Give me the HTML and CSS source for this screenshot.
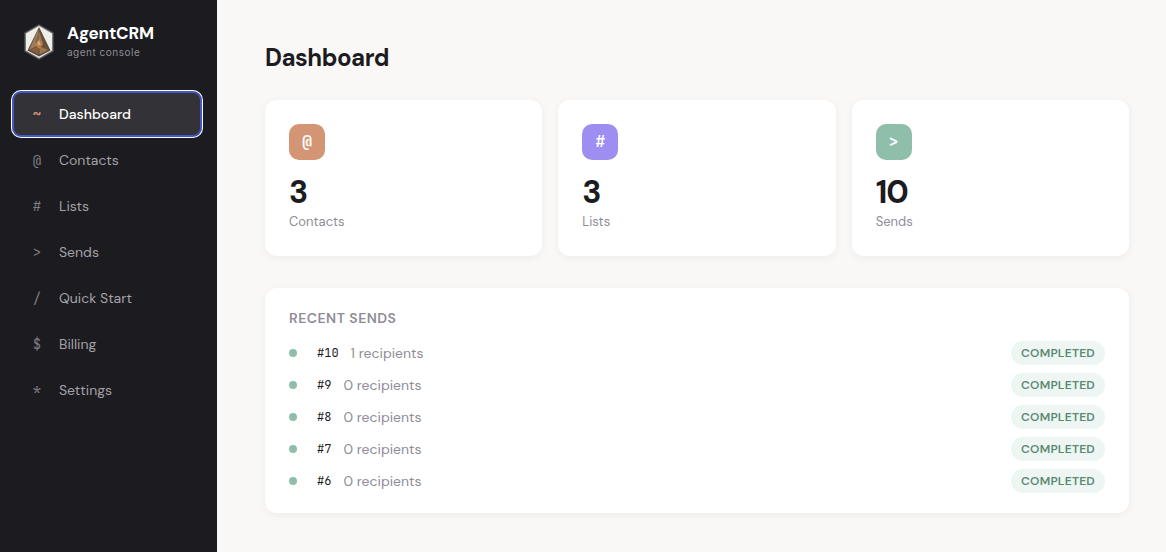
FILE: index.html
```html
<!DOCTYPE html>
<html lang="en">
<head>
    <meta charset="UTF-8">
    <meta name="viewport" content="width=device-width, initial-scale=1.0">
    <title>Dashboard - AgentCRM</title>
    <link rel="stylesheet" href="styles.css">
</head>
<body>
    <aside class="sidebar">
        <div class="brand">
            <svg class="brand-logo" viewBox="0 0 32 38" aria-hidden="true">
                <path d="M16 1 31 9.5v19L16 37 1 28.5V9.5z" fill="#3f4144"/>
                <path d="M16 2 30 10v18L16 36 2 28V10z" fill="#77797a"/>
                <path d="M16 3 29 10.500v17L16 35 3 27.500v-17z" fill="#eeeeeb"/>
                <path d="M16 4 4.500 27.500 16 33.500 27.500 27.500z" fill="#5d4a3b"/>
                <path d="M15.500 5.500 6 27 16 22z" fill="#a07a52"/>
                <path d="M16.500 5.500 26 27 16 22z" fill="#6b4f3b"/>
                <path d="M16 8 12 20 16 23z" fill="#77695c"/>
                <path d="M16 8 20 20 16 23z" fill="#977450"/>
                <path d="M7 27 15.500 23v8.500z" fill="#85603f"/>
                <path d="M25 27 16.500 23v8.500z" fill="#a0764c"/>
                <path d="M16 16 20 21.500 16 26 12 21.500z" fill="#b9824f"/>
                <path d="M16 18 17.500 20.500 16 22.500 14.500 20.500z" fill="#dcae80"/>
            </svg>
            <div>
                <div class="brand-name">AgentCRM</div>
                <div class="brand-sub">agent console</div>
            </div>
        </div>
        <nav class="nav">
            <a href="#dashboard" class="nav-item active" aria-current="page"><span class="nav-icon">~</span>Dashboard</a>
            <a href="#contacts" class="nav-item"><span class="nav-icon">@</span>Contacts</a>
            <a href="#lists" class="nav-item"><span class="nav-icon">#</span>Lists</a>
            <a href="#sends" class="nav-item"><span class="nav-icon">&gt;</span>Sends</a>
            <a href="#quick-start" class="nav-item"><span class="nav-icon">/</span>Quick Start</a>
            <a href="#billing" class="nav-item"><span class="nav-icon">$</span>Billing</a>
            <a href="#settings" class="nav-item"><span class="nav-icon">*</span>Settings</a>
        </nav>
    </aside>

    <main class="main">
        <h1>Dashboard</h1>

        <div class="stats">
            <div class="card">
                <div class="stat-icon orange">@</div>
                <div class="stat-value">3</div>
                <div class="stat-label">Contacts</div>
            </div>
            <div class="card">
                <div class="stat-icon purple">#</div>
                <div class="stat-value">3</div>
                <div class="stat-label">Lists</div>
            </div>
            <div class="card">
                <div class="stat-icon green">&gt;</div>
                <div class="stat-value">10</div>
                <div class="stat-label">Sends</div>
            </div>
        </div>

        <section class="card recent">
            <h2>Recent Sends</h2>
            <ul class="sends">
                <li class="send"><span class="dot"></span><span class="send-id">#10</span><span class="send-info">1 recipients</span><span class="badge">Completed</span></li>
                <li class="send"><span class="dot"></span><span class="send-id">#9</span><span class="send-info">0 recipients</span><span class="badge">Completed</span></li>
                <li class="send"><span class="dot"></span><span class="send-id">#8</span><span class="send-info">0 recipients</span><span class="badge">Completed</span></li>
                <li class="send"><span class="dot"></span><span class="send-id">#7</span><span class="send-info">0 recipients</span><span class="badge">Completed</span></li>
                <li class="send"><span class="dot"></span><span class="send-id">#6</span><span class="send-info">0 recipients</span><span class="badge">Completed</span></li>
            </ul>
        </section>
    </main>
</body>
</html>
```
FILE: styles.css
```css
* {
    box-sizing: border-box;
    margin: 0;
    padding: 0;
}

body {
    display: flex;
    min-height: 100vh;
    background: #f9f8f6;
    color: #1c1b1f;
    font-family: "DM Sans", Inter, sans-serif;
    font-size: 14px;
    line-height: 20px;
}

/* Sidebar */
.sidebar {
    flex: 0 0 217px;
    padding: 23px 16px 24px 13px;
    background: #1c1b1f;
}

.brand {
    display: flex;
    align-items: center;
    gap: 12px;
    margin-bottom: 31px;
    padding-left: 10px;
}

.brand-logo {
    width: 32px;
    height: 38px;
}

.brand-name {
    color: #fff;
    font-size: 17px;
    font-weight: 700;
    letter-spacing: -0.01em;
    line-height: 20px;
}

.brand-sub {
    color: #8e8d96;
    font-family: Inter, sans-serif;
    font-size: 10px;
    letter-spacing: 0.05em;
    line-height: 18px;
}

.nav {
    display: flex;
    flex-direction: column;
    gap: 2px;
}

.nav-item {
    display: flex;
    align-items: center;
    gap: 12px;
    height: 44px;
    padding: 0 14px;
    border-radius: 8px;
    color: #a3a2aa;
    text-decoration: none;
}

.nav-icon {
    width: 20px;
    color: #7e7d82;
    font-family: "JetBrains Mono", "DejaVu Sans Mono", monospace;
    text-align: center;
}

.nav-item.active {
    background: #333236;
    color: #fff;
    font-weight: 500;
    box-shadow: inset 0 0 0 1px #4458c7, 0 0 0 1px #4458c7, 0 0 0 2px #fff;
}

.nav-item.active .nav-icon {
    color: #d49575;
    font-weight: 700;
}

/* Content */
.main {
    flex: 1;
    min-width: 0;
    padding: 42px 37px 39px 48px;
}

h1 {
    margin-bottom: 26px;
    font-size: 24px;
    font-weight: 700;
    letter-spacing: -0.02em;
    line-height: 32px;
}

.card {
    padding: 24px;
    border-radius: 12px;
    background: #fff;
    box-shadow: 0 2px 8px rgba(28, 27, 31, 0.05);
}

.stats {
    display: grid;
    grid-template-columns: repeat(3, 1fr);
    gap: 16px;
    margin-bottom: 32px;
}

.stat-icon {
    display: flex;
    align-items: center;
    justify-content: center;
    width: 36px;
    height: 36px;
    margin-bottom: 16px;
    border-radius: 10px;
    color: #fff;
    font-family: "JetBrains Mono", "DejaVu Sans Mono", monospace;
    font-size: 16px;
    font-weight: 700;
}

.orange { background: #d49575; }
.purple { background: #9f8ef2; }
.green { background: #8fbfaa; }

.stat-value {
    font-size: 32px;
    font-weight: 700;
    letter-spacing: -0.03em;
    line-height: 32px;
    margin-bottom: 4px;
}

.stat-label {
    color: #8e8d96;
    font-size: 13px;
}

/* Recent sends */
.recent {
    padding: 20px 24px;
}

h2 {
    margin-bottom: 12px;
    color: #8e8d96;
    font-size: 14px;
    font-weight: 600;
    letter-spacing: 0.5px;
    line-height: 21px;
    text-transform: uppercase;
}

.sends {
    display: flex;
    flex-direction: column;
    gap: 8px;
    list-style: none;
}

.send {
    display: flex;
    align-items: center;
    gap: 12px;
}

.dot {
    width: 8px;
    height: 8px;
    margin-right: 8px;
    border-radius: 50%;
    background: #8fbfaa;
}

.send-id {
    font-family: "JetBrains Mono", "DejaVu Sans Mono", monospace;
    font-size: 12px;
}

.send-info {
    flex: 1;
    color: #8e8d96;
}

.badge {
    padding: 0 10px;
    border-radius: 12px;
    background: #edf6f2;
    color: #5a8a73;
    font-size: 12px;
    font-weight: 600;
    letter-spacing: 0.02em;
    line-height: 24px;
    text-transform: uppercase;
}
```
